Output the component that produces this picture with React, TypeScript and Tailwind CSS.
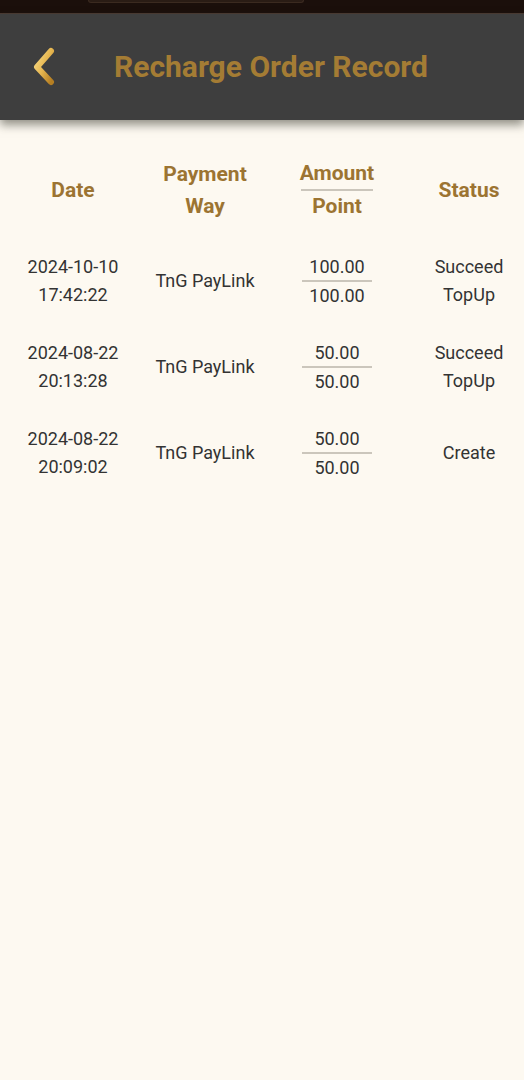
import React from "react";

const rows = [
  { d: "2024-10-10", t: "17:42:22", amt: "100.00", pt: "100.00", s: ["Succeed", "TopUp"] },
  { d: "2024-08-22", t: "20:13:28", amt: "50.00", pt: "50.00", s: ["Succeed", "TopUp"] },
  { d: "2024-08-22", t: "20:09:02", amt: "50.00", pt: "50.00", s: ["Create"] },
];

export default function App() {
  return (
    <div className="w-[524px] h-[1080px] overflow-hidden bg-[#fdf9f1] font-['Roboto',sans-serif]">
      <div className="h-[14px] bg-[#1b0f0b] border-b border-[#4a3a32]">
        <div className="ml-[88px] w-[216px] h-[3px] rounded-b-[10px] bg-[#2a1c15] border-b border-x border-[#3b2a20]" />
      </div>
      <div className="relative z-10 h-[106px] bg-[#3e3e3e] flex items-center shadow-[0_5px_9px_rgba(60,60,50,0.55)]">
        <div className="w-[114px] pl-[32px] flex items-center">
          <svg width="26" height="40" viewBox="0 0 26 40">
            <defs>
              <linearGradient id="g" x1="0" y1="0" x2="1" y2="1">
                <stop offset="0" stopColor="#f7da85" />
                <stop offset="0.5" stopColor="#e6b650" />
                <stop offset="1" stopColor="#b57e22" />
              </linearGradient>
            </defs>
            <path d="M19 4 L5 20 L19 35" fill="none" stroke="url(#g)" strokeWidth="6" strokeLinecap="round" strokeLinejoin="round" />
          </svg>
        </div>
        <div className="text-[30px] font-bold text-[#a47c34] leading-none">Recharge Order Record</div>
      </div>
      <div className="pl-[7px] pt-[38px]">
        <div className="flex text-[21px] font-bold text-[#9c7432] leading-[32px] text-center">
          <div className="w-[132px] shrink-0 flex items-center justify-center">Date</div>
          <div className="w-[132px] shrink-0 flex flex-col items-center justify-center">
            <span>Payment</span>
            <span>Way</span>
          </div>
          <div className="w-[132px] shrink-0 flex flex-col items-center justify-center">
            <span className="leading-[31px]">Amount</span>
            <div className="w-[72px] h-[2px] bg-[#cbc6bc]" />
            <span className="leading-[31px]">Point</span>
          </div>
          <div className="w-[132px] shrink-0 flex items-center justify-center">Status</div>
        </div>
        <div className="flex flex-col gap-[30px] mt-[31px]">
          {rows.map((r, i) => (
            <div key={i} className="flex h-[56px] text-[18px] text-[#333333] leading-[28px] text-center">
              <div className="w-[132px] shrink-0 flex flex-col items-center justify-center">
                <span>{r.d}</span>
                <span>{r.t}</span>
              </div>
              <div className="w-[132px] shrink-0 flex items-center justify-center">TnG PayLink</div>
              <div className="w-[132px] shrink-0 flex flex-col items-center justify-center">
                <span className="leading-[27px]">{r.amt}</span>
                <div className="w-[70px] h-[2px] bg-[#cbc6bc]" />
                <span className="leading-[27px]">{r.pt}</span>
              </div>
              <div className="w-[132px] shrink-0 flex flex-col items-center justify-center">
                {r.s.map((x) => (
                  <span key={x}>{x}</span>
                ))}
              </div>
            </div>
          ))}
        </div>
      </div>
    </div>
  );
}
